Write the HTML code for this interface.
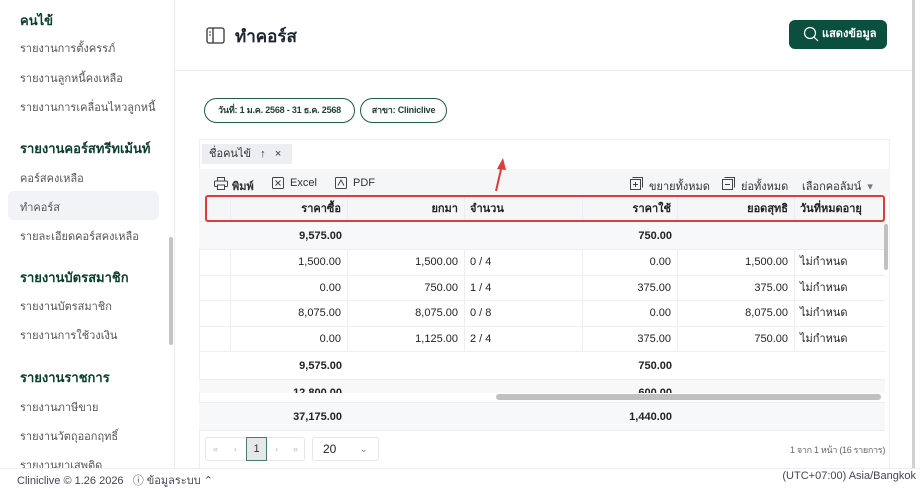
<!DOCTYPE html>
<html><head><meta charset="utf-8"><style>
*{box-sizing:border-box;margin:0;padding:0}
body{width:920px;height:485px;overflow:hidden;background:#fff;font-family:"Liberation Sans","Noto Sans CJK SC",sans-serif;color:#222;position:relative;font-size:12px}
.abs{position:absolute}
.side{left:0;top:0;width:175px;height:468px;border-right:1px solid #e8ebef;background:#fff}
.side .h{position:absolute;left:20px;font-weight:bold;color:#0b3d2e;font-size:13px}
.side .i{position:absolute;left:20px;color:#555;font-size:11px}
.sel{position:absolute;left:8px;top:191px;width:151px;height:29px;background:#f1f3f6;border-radius:6px}
.chip{border:1.5px solid #1f5a48;border-radius:13px;height:25px;font-size:9px;font-weight:bold;color:#1f3f35;line-height:22px;text-align:center;white-space:nowrap;letter-spacing:-0.2px}
.tb{font-size:11px;color:#333}
.row{position:absolute;left:199px;width:686px;border-bottom:1px solid #eceef1}
.c{position:absolute;top:0;height:100%;font-size:11px;line-height:25px;border-right:1px solid #eceef1}
.r{text-align:right;padding-right:6px}
.l{padding-left:5px}
.b{font-weight:bold}
</style></head><body>
<div class="abs side">
<div class="h" style="top:10px">คนไข้</div>
<div class="i" style="top:39px">รายงานการตั้งครรภ์</div>
<div class="i" style="top:69px">รายงานลูกหนี้คงเหลือ</div>
<div class="i" style="top:98px">รายงานการเคลื่อนไหวลูกหนี้</div>
<div class="h" style="top:138px">รายงานคอร์สทรีทเม้นท์</div>
<div class="i" style="top:169px">คอร์สคงเหลือ</div>
<div class="sel"></div>
<div class="i" style="top:198px">ทำคอร์ส</div>
<div class="i" style="top:227px">รายละเอียดคอร์สคงเหลือ</div>
<div class="h" style="top:267px">รายงานบัตรสมาชิก</div>
<div class="i" style="top:297px">รายงานบัตรสมาชิก</div>
<div class="i" style="top:326px">รายงานการใช้วงเงิน</div>
<div class="h" style="top:367px">รายงานราชการ</div>
<div class="i" style="top:398px">รายงานภาษีขาย</div>
<div class="i" style="top:427px">รายงานวัตถุออกฤทธิ์</div>
<div class="i" style="top:456px">รายงานยาเสพติด</div>
<div class="abs" style="left:169px;top:237px;width:4px;height:108px;background:#c4c4c4;border-radius:2px"></div>
</div>
<svg class="abs" style="left:206px;top:27px" width="19" height="17" viewBox="0 0 19 17"><rect x="1" y="1" width="17" height="15" rx="2" fill="none" stroke="#333" stroke-width="1.3"/><line x1="7" y1="1" x2="7" y2="16" stroke="#333" stroke-width="1.3"/><line x1="3" y1="5" x2="5" y2="5" stroke="#333"/><line x1="3" y1="8" x2="5" y2="8" stroke="#333"/></svg>
<div class="abs" style="left:235px;top:23px;font-size:17px;font-weight:bold;color:#1c2430">ทำคอร์ส</div>
<div class="abs" style="left:789px;top:20px;width:98px;height:29px;background:#0b4f3e;border-radius:6px;color:#fff;font-size:11px;font-weight:bold;line-height:29px;padding-left:33px;white-space:nowrap">แสดงข้อมูล</div>
<svg class="abs" style="left:803px;top:26px" width="17" height="17"><circle cx="7" cy="7" r="5.5" fill="none" stroke="#fff" stroke-width="1.2"/><line x1="11" y1="11" x2="15" y2="15" stroke="#fff" stroke-width="1.2"/></svg>
<div class="abs" style="left:175px;top:70px;width:737px;height:1px;background:#e8ebef"></div>
<div class="abs" style="left:912px;top:0;width:3px;height:468px;background:#d0d0d0"></div>
<div class="abs chip" style="left:204px;top:98px;width:151px">วันที่: 1 ม.ค. 2568 - 31 ธ.ค. 2568</div>
<div class="abs chip" style="left:360px;top:98px;width:87px">สาขา: Cliniclive</div>
<div class="abs" style="left:199px;top:139px;width:691px;height:330px;border:1px solid #eceef1"></div>
<div class="abs" style="left:202px;top:144px;width:90px;height:20px;background:#eceef1;font-size:11px;line-height:20px;padding-left:7px;color:#333">ชื่อคนไข้ &nbsp;&nbsp;↑ &nbsp;&nbsp;×</div>
<div class="abs" style="left:199px;top:169px;width:691px;height:28px;background:#f5f6f8"></div>
<svg class="abs" style="left:214px;top:177px" width="14" height="13"><rect x="3.5" y="0.5" width="7" height="3.5" fill="none" stroke="#444"/><rect x="0.5" y="4" width="13" height="5.5" rx="1" fill="none" stroke="#444"/><rect x="3.5" y="8" width="7" height="4.5" fill="#fff" stroke="#444"/></svg>
<div class="abs tb b" style="left:232px;top:177px">พิมพ์</div>
<svg class="abs" style="left:272px;top:177px" width="12" height="12"><rect x="0.5" y="0.5" width="11" height="11" rx="1" fill="none" stroke="#444"/><path d="M3.5 3.5L8.5 8.5M8.5 3.5L3.5 8.5" stroke="#444"/></svg>
<div class="abs tb" style="left:290px;top:177px">Excel</div>
<svg class="abs" style="left:335px;top:177px" width="12" height="12"><rect x="0.5" y="0.5" width="11" height="11" rx="1" fill="none" stroke="#444"/><path d="M3 8.5L6 3L9 8.5" fill="none" stroke="#444"/></svg>
<div class="abs tb" style="left:353px;top:177px">PDF</div>
<svg class="abs" style="left:630px;top:177px" width="13" height="13"><rect x="0.5" y="2.5" width="10" height="10" fill="none" stroke="#444"/><path d="M2.5 0.5H12.5V10.5" fill="none" stroke="#444"/><path d="M5.5 5V10M3 7.5H8" stroke="#444"/></svg>
<div class="abs tb" style="left:649px;top:177px">ขยายทั้งหมด</div>
<svg class="abs" style="left:722px;top:177px" width="13" height="13"><rect x="0.5" y="2.5" width="10" height="10" fill="none" stroke="#444"/><path d="M2.5 0.5H12.5V10.5" fill="none" stroke="#444"/><path d="M3 7.5H8" stroke="#444"/></svg>
<div class="abs tb" style="left:741px;top:177px">ย่อทั้งหมด</div>
<div class="abs tb" style="left:802px;top:177px">เลือกคอลัมน์ &nbsp;<span style="color:#777">▾</span></div>
<div class="row" style="top:197px;height:25px;background:#f5f6f8">
<div class="c" style="left:0;width:32px"></div><div class="c r b" style="left:32px;width:117px">ราคาซื้อ</div><div class="c r b" style="left:149px;width:117px">ยกมา</div><div class="c l b" style="left:266px;width:118px">จำนวน</div><div class="c r b" style="left:384px;width:95px">ราคาใช้</div><div class="c r b" style="left:479px;width:117px">ยอดสุทธิ</div><div class="c l b" style="left:596px;width:90px;border:0">วันที่หมดอายุ</div></div>
<div class="row" style="top:222px;height:28px;background:#f7f8fa;line-height:28px"><div class="abs b" style="left:0;width:143px;text-align:right;font-size:11px;line-height:28px">9,575.00</div><div class="abs b" style="left:384px;width:89px;text-align:right;font-size:11px;line-height:28px">750.00</div></div>
<div class="row" style="top:250px;height:26px"><div class="c" style="left:0;width:32px"></div><div class="c r" style="left:32px;width:117px">1,500.00</div><div class="c r" style="left:149px;width:117px">1,500.00</div><div class="c l" style="left:266px;width:118px">0 / 4</div><div class="c r" style="left:384px;width:95px">0.00</div><div class="c r" style="left:479px;width:117px">1,500.00</div><div class="c l" style="left:596px;width:90px;border:0">ไม่กำหนด</div></div>
<div class="row" style="top:276px;height:25px"><div class="c" style="left:0;width:32px"></div><div class="c r" style="left:32px;width:117px">0.00</div><div class="c r" style="left:149px;width:117px">750.00</div><div class="c l" style="left:266px;width:118px">1 / 4</div><div class="c r" style="left:384px;width:95px">375.00</div><div class="c r" style="left:479px;width:117px">375.00</div><div class="c l" style="left:596px;width:90px;border:0">ไม่กำหนด</div></div>
<div class="row" style="top:301px;height:26px"><div class="c" style="left:0;width:32px"></div><div class="c r" style="left:32px;width:117px">8,075.00</div><div class="c r" style="left:149px;width:117px">8,075.00</div><div class="c l" style="left:266px;width:118px">0 / 8</div><div class="c r" style="left:384px;width:95px">0.00</div><div class="c r" style="left:479px;width:117px">8,075.00</div><div class="c l" style="left:596px;width:90px;border:0">ไม่กำหนด</div></div>
<div class="row" style="top:327px;height:25px"><div class="c" style="left:0;width:32px"></div><div class="c r" style="left:32px;width:117px">0.00</div><div class="c r" style="left:149px;width:117px">1,125.00</div><div class="c l" style="left:266px;width:118px">2 / 4</div><div class="c r" style="left:384px;width:95px">375.00</div><div class="c r" style="left:479px;width:117px">750.00</div><div class="c l" style="left:596px;width:90px;border:0">ไม่กำหนด</div></div>
<div class="row" style="top:352px;height:28px"><div class="abs b" style="left:0;width:143px;text-align:right;font-size:11px;line-height:28px">9,575.00</div><div class="abs b" style="left:384px;width:89px;text-align:right;font-size:11px;line-height:28px">750.00</div></div>
<div class="row" style="top:380px;height:13px;background:#f7f8fa;overflow:hidden;border:0"><div class="abs b" style="left:0;width:143px;text-align:right;font-size:11px;top:7px">12,800.00</div><div class="abs b" style="left:384px;width:89px;text-align:right;font-size:11px;top:7px">600.00</div></div>
<div class="abs" style="left:496px;top:394px;width:385px;height:6px;background:#c0c0c0;border-radius:3px"></div>
<div class="abs" style="left:884px;top:224px;width:4px;height:46px;background:#c0c0c0;border-radius:2px"></div>
<div class="row" style="top:402px;height:29px;background:#f7f8fa;border-top:1px solid #eceef1"><div class="abs b" style="left:0;width:143px;text-align:right;font-size:11px;line-height:29px">37,175.00</div><div class="abs b" style="left:384px;width:89px;text-align:right;font-size:11px;line-height:29px">1,440.00</div></div>
<div class="abs" style="left:205px;top:437px;width:100px;height:24px;border:1px solid #e3e6ea;border-radius:3px;font-size:9px;color:#bbb;line-height:22px"><span style="position:absolute;left:7px">«</span><span style="position:absolute;left:28px">‹</span><span style="position:absolute;left:40px;top:-1px;width:21px;height:24px;border:1px solid #4a7a6a;background:#e5e7eb;color:#333;text-align:center;font-size:11px">1</span><span style="position:absolute;left:69px">›</span><span style="position:absolute;left:87px">»</span></div>
<div class="abs" style="left:312px;top:437px;width:67px;height:24px;border:1px solid #e3e6ea;border-radius:3px;font-size:12px;line-height:22px;padding-left:10px">20<span style="position:absolute;left:47px;font-size:9px;color:#777">⌄</span></div>
<div class="abs" style="left:790px;top:443px;font-size:9px;color:#666;white-space:nowrap;letter-spacing:-0.3px">1 จาก 1 หน้า (16 รายการ)</div>
<div class="abs" style="left:0;top:468px;width:920px;height:17px;border-top:1px solid #eceef1;background:#fff"></div>
<div class="abs" style="left:17px;top:471px;font-size:11px;color:#445">Cliniclive © 1.26 2026 &nbsp;&nbsp;ⓘ ข้อมูลระบบ ⌃</div>
<div class="abs" style="right:4px;top:470px;font-size:11px;color:#445">(UTC+07:00) Asia/Bangkok</div>
<div class="abs" style="left:205px;top:195px;width:680px;height:27px;border:2.5px solid #e03a3a;border-radius:3px"></div>
<svg class="abs" style="left:488px;top:155px" width="20" height="40"><line x1="8" y1="36" x2="14" y2="10" stroke="#e03a3a" stroke-width="2"/><polygon points="15,3 9,14 18,15" fill="#e03a3a"/></svg>
</body></html>
